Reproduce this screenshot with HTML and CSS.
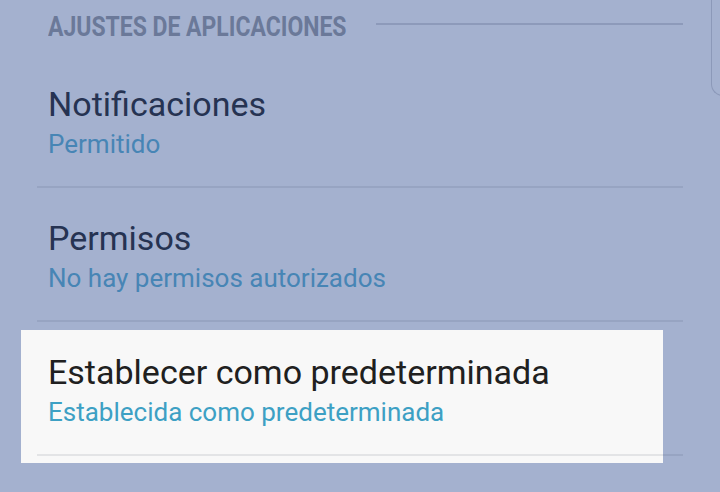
FILE: index.html
```html
<!DOCTYPE html>
<html lang="es">
<head>
<meta charset="utf-8">
<title>Ajustes de aplicaciones</title>
<link rel="stylesheet" href="styles.css">
</head>
<body>
<div class="screen">
  <div class="edge"></div>
  <div class="section-header">
    <div class="section-title-wrap"><span class="section-title">AJUSTES DE APLICACIONES</span></div>
    <div class="section-line"></div>
  </div>
  <div class="row">
    <div class="row-body">
      <div class="row-title">Notificaciones</div>
      <div class="row-sub">Permitido</div>
    </div>
    <div class="divider"></div>
  </div>
  <div class="row">
    <div class="row-body">
      <div class="row-title">Permisos</div>
      <div class="row-sub">No hay permisos autorizados</div>
    </div>
    <div class="divider"></div>
  </div>
  <div class="row row-focus">
    <div class="row-body">
      <div class="row-title">Establecer como predeterminada</div>
      <div class="row-sub">Establecida como predeterminada</div>
    </div>
    <div class="divider divider-focus"></div>
  </div>
  <div class="row">
    <div class="row-body">
      <div class="row-title">Almacenamiento</div>
      <div class="row-sub">Memoria interna</div>
    </div>
  </div>
</div>
</body>
</html>
```

FILE: styles.css
```css
html, body {
  margin: 0;
  padding: 0;
}
body {
  background: #a4b1cf;
  font-family: Roboto, "Liberation Sans", sans-serif;
  width: 720px;
  height: 492px;
  overflow: hidden;
}
.screen {
  position: relative;
  width: 720px;
  height: 492px;
  overflow: hidden;
}
.edge {
  position: absolute;
  left: 711px;
  top: -20px;
  width: 30px;
  height: 115px;
  border-left: 1px solid #8c99b9;
  border-bottom: 1px solid #8c99b9;
  border-bottom-left-radius: 12px;
}
.section-header {
  display: flex;
  align-items: center;
  padding: 11px 37px 0 48px;
  height: 32px;
  margin-bottom: 11px;
}
.section-title-wrap {
  width: 328px;
  flex: none;
  white-space: nowrap;
}
.section-title {
  display: inline-block;
  font-weight: 700;
  font-size: 28px;
  line-height: 32px;
  color: #6b7999;
  transform: scaleX(0.82);
  transform-origin: left center;
}
.section-line {
  flex: 1;
  height: 2px;
  margin-bottom: 7px;
  background: #8d9aba;
}
.row {
  position: relative;
  z-index: 0;
}
.row-body {
  padding: 30px 37px 27px 48px;
}
.row-title {
  font-size: 34px;
  line-height: 40px;
  color: #263352;
  white-space: nowrap;
}
.row-sub {
  margin-top: 5px;
  font-size: 26px;
  line-height: 30px;
  color: #4785b5;
  white-space: nowrap;
}
.divider {
  height: 2px;
  margin: 0 37px;
  background: #97a4c2;
}
.row-focus::before {
  content: "";
  position: absolute;
  z-index: -1;
  top: 8px;
  bottom: -7px;
  left: 21px;
  right: 57px;
  background: #f8f8f8;
}
.row-focus .row-title {
  color: #202020;
}
.row-focus .row-sub {
  color: #3da0c4;
}
.divider-focus {
  background: linear-gradient(to right, #e3e4e6 0, #e3e4e6 626px, #97a4c2 626px);
}
```
